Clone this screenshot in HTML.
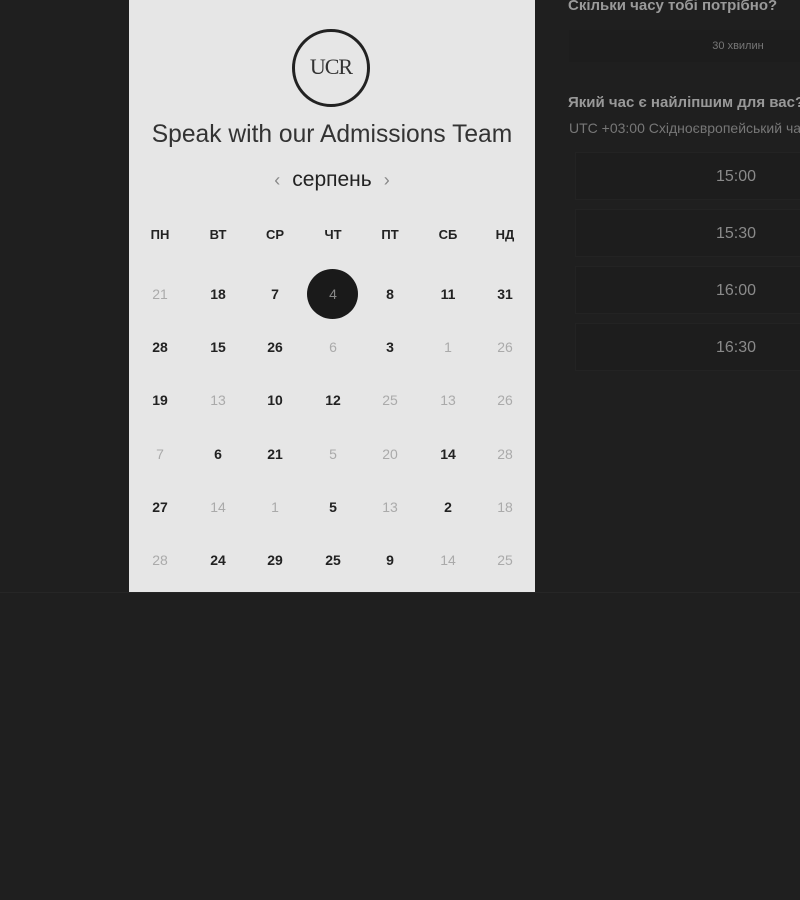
<!DOCTYPE html>
<html><head><meta charset="utf-8"><style>
body{margin:0;width:800px;height:900px;background:#1f1f1f;position:relative;overflow:hidden;font-family:"Liberation Sans",sans-serif}
.panel{position:absolute;left:129px;top:0;width:406px;height:592px;background:#e6e6e6}
.logo{position:absolute;left:163px;top:29px;width:72px;height:72px;border:3px solid #222;border-radius:50%;text-align:center;font-family:"Liberation Serif",serif;font-size:22px;line-height:70px;color:#333;letter-spacing:-1px}
.title{position:absolute;left:0;width:406px;top:121px;text-align:center;font-size:24.6px;color:#333}
.month{position:absolute;left:0;width:406px;top:168px;text-align:center;font-size:21px;color:#222}
.month span{color:#888;font-size:18px;margin:0 12px}
.d{position:absolute;width:50px;margin-left:-25px;text-align:center;font-size:14px;color:#222;font-weight:bold}
.dh{font-weight:bold;font-size:13px;color:#222}
.g{color:#aaa;font-weight:normal}
.sel{position:absolute;left:307px;top:269px;width:51px;height:50px;border-radius:50%;background:#1a1a1a}
.slot{position:absolute;left:575px;width:240px;height:48px;border:1px solid #232323;background:#1d1d1d;color:#8a8a8a;font-size:16px;text-align:center;line-height:48px;padding-left:82px;box-sizing:border-box}
</style></head><body>
<div class="panel">
<div class="logo">UCR</div>
<div class="title">Speak with our Admissions Team</div>
<div class="month"><span>‹</span>серпень<span>›</span></div>
</div>
<div class="sel"></div>
<div style="position:absolute;left:0;top:592px;width:800px;height:1px;background:#262626"></div>
<div id="cal"></div>
<div style="position:absolute;left:568px;top:-3px;color:#9a9a9a;font-size:15px;font-weight:bold">Скільки часу тобі потрібно?</div>
<div style="position:absolute;left:569px;top:30px;width:250px;height:32px;background:#1d1d1d;color:#777;font-size:11px;line-height:32px;text-align:center;padding-left:88px;box-sizing:border-box">30 хвилин</div>
<div style="position:absolute;left:568px;top:94px;color:#999;font-size:15px;font-weight:bold;white-space:nowrap">Який час є найліпшим для вас?</div>
<div style="position:absolute;left:569px;top:120px;color:#777;font-size:14px;white-space:nowrap">UTC +03:00 Східноєвропейський час</div>
<div class="slot" style="top:152px">15:00</div>
<div class="slot" style="top:209px">15:30</div>
<div class="slot" style="top:266px">16:00</div>
<div class="slot" style="top:323px">16:30</div>
<script>
var xs=[160,218,275,333,390,448,505],ys=[286,339,392,446,499,552];
var h=["ПН","ВТ","СР","ЧТ","ПТ","СБ","НД"];
var rows=[["21g","18","7","4s","8","11","31"],["28","15","26","6g","3","1g","26g"],["19","13g","10","12","25g","13g","26g"],["7g","6","21","5g","20g","14","28g"],["27","14g","1g","5","13g","2","18g"],["28g","24","29","25","9","14g","25g"]];
var o="";
h.forEach(function(t,i){o+='<div class="d dh" style="left:'+xs[i]+'px;top:227px">'+t+'</div>'});
rows.forEach(function(r,j){r.forEach(function(t,i){var c="d";if(t.slice(-1)=="g"){c+=" g";t=t.slice(0,-1)}var st="";if(t.slice(-1)=="s"){t=t.slice(0,-1);st="color:#888;font-weight:normal;"}o+='<div class="'+c+'" style="'+st+'left:'+xs[i]+'px;top:'+ys[j]+'px">'+t+'</div>'})});
document.getElementById("cal").innerHTML=o;
</script>
</body></html>
